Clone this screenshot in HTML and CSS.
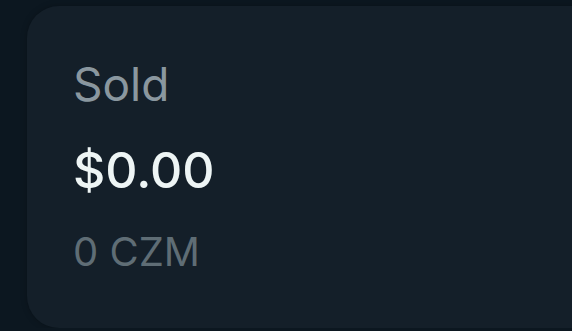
FILE: index.html
```html
<!DOCTYPE html>
<html lang="en">
<head>
    <meta charset="UTF-8">
    <meta name="viewport" content="width=device-width, initial-scale=1.0">
    <title>Sold</title>
    <link rel="stylesheet" href="styles.css">
</head>
<body>
    <div class="card">
        <div class="label">Sold</div>
        <div class="value">$0.00</div>
        <div class="sub">0 CZM</div>
    </div>
</body>
</html>
```

FILE: styles.css
```css
body {
    margin: 0;
    background-color: #0c1720;
    font-family: Inter, "Noto Sans", sans-serif;
    overflow: hidden;
}
.card {
    margin: 6px 0 0 27px;
    width: 600px;
    height: 322px;
    box-sizing: border-box;
    padding: 51px 0 0 46px;
    background-color: #141f29;
    border-radius: 32px;
    box-shadow: 0 0 6px rgba(0,0,0,0.25);
}
.label {
    font-size: 46px;
    line-height: 54px;
    color: #8a979f;
}
.value {
    margin-top: 30px;
    font-size: 50px;
    line-height: 58px;
    font-weight: 500;
    color: #eef5f5;
}
.sub {
    margin-top: 29px;
    font-size: 40px;
    line-height: 48px;
    color: #5f6d75;
}
```
